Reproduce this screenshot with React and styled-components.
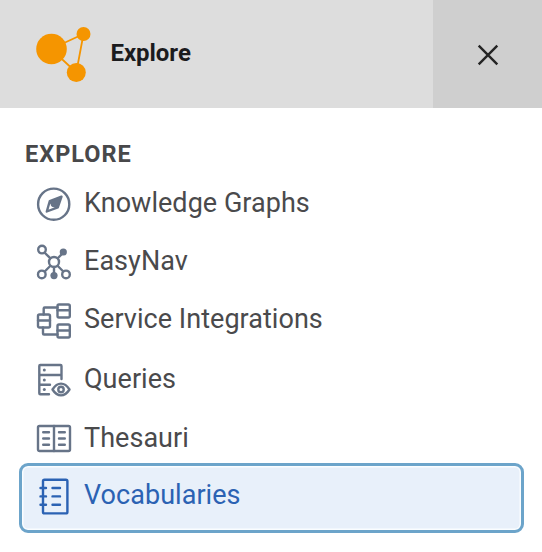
import React from "react";
import styled, { createGlobalStyle } from "styled-components";

const GlobalStyle = createGlobalStyle`
  * { box-sizing: border-box; }
  body { margin: 0; background: #fff; font-family: Roboto, "Liberation Sans", sans-serif; }
`;

const Panel = styled.div`
  width: 542px;
  height: 552px;
  overflow: hidden;
  background: #fff;
`;

const Header = styled.header`
  display: flex;
  height: 108px;
  background: #dddddd;
`;

const Brand = styled.div`
  flex: 1;
  display: flex;
  align-items: center;
  padding: 0 0 1px 34px;
  gap: 16.5px;
`;

const Title = styled.h1`
  margin: 0 0 2px;
  font-size: 24px;
  line-height: 32px;
  font-weight: 700;
  letter-spacing: -0.05px;
  color: #1b1b1d;
  white-space: nowrap;
`;

const CloseButton = styled.button`
  display: flex;
  align-items: center;
  justify-content: center;
  width: 109px;
  padding: 2px 0 0;
  border: 0;
  background: #cfcfcf;
  color: #242424;
`;

const Section = styled.nav`
  padding: 30px 18px 0 19px;
`;

const SectionTitle = styled.h2`
  margin: 0;
  padding-left: 6px;
  font-size: 23.5px;
  line-height: 32px;
  font-weight: 700;
  letter-spacing: 1px;
  color: #48484a;
`;

const List = styled.ul`
  list-style: none;
  margin: 4px 0 0;
  padding: 0;
`;

const Item = styled.li`
  display: flex;
  align-items: center;
  height: ${(p) => (p.$active ? 70 : p.$height)}px;
  gap: 12px;
  padding: ${(p) => (p.$active ? "0 0 5px 14px" : `${p.$inset || 0}px 0 0 17px`)};
  border: ${(p) => (p.$active ? "3px solid #6ca4ca" : "0")};
  border-radius: 9px;
  box-shadow: ${(p) => (p.$active ? "inset 0 0 0 1.5px #fafdff" : "none")};
  background: ${(p) => (p.$active ? "#e8f0fa" : "transparent")};
  color: ${(p) => (p.$active ? "#2b62b3" : "#4a4a4c")};
`;

const Label = styled.span`
  margin-bottom: ${(p) => (p.$active ? 2 : 0)}px;
  font-size: 27px;
  line-height: 34px;
  letter-spacing: 0.04px;
  white-space: nowrap;
`;

const Glyph = styled.svg`
  flex: none;
  width: 36px;
  height: 40px;
  fill: none;
  stroke: ${(p) => (p.$active ? "#2b62b3" : "#677488")};
  stroke-width: 2.4;
  stroke-linecap: round;
  stroke-linejoin: round;
`;

const Solid = styled.g`
  fill: #677488;
  stroke: none;
`;

const icons = {
  compass: (
    <>
      <circle cx="17.7" cy="21.2" r="15.6" />
      <path d="M25.5 13.6 13.8 18 10.8 28.5 21.8 24.3Z" />
      <path d="M25.5 13.6 13.8 18 12.5 22.5 17.5 18.5 18.6 25.5 21.8 24.3Z" fill="#677488" stroke="none" />
      <circle cx="18" cy="20.8" r="3.4" fill="#677488" stroke="none" />
    </>
  ),
  network: (
    <>
      <path d="m9 12 5.2 5.2M22 17l4-4M18 26v6M14.2 25l-5 5M21.8 25l5 5" />
      <circle cx="18" cy="21" r="5" />
      <circle cx="6" cy="8.6" r="3.8" />
      <circle cx="5.8" cy="33.4" r="3.8" />
      <circle cx="30" cy="33.4" r="3.8" />
      <Solid><circle cx="27.3" cy="11" r="3.6" /><circle cx="18" cy="34.6" r="3.6" /></Solid>
    </>
  ),
  integration: (
    <>
      <rect x="2" y="15.5" width="12" height="13" rx="1.5" />
      <rect x="21.5" y="5.5" width="12.3" height="13" rx="1.5" />
      <rect x="21.5" y="25.5" width="12.3" height="13" rx="1.5" />
      <path d="M2 21.5h12M21.5 11.2h12.3M21.5 31.5h12.3M7.7 15.5V9.5q0-1 1-1h12.8M7 28.5V34.5q0 1 1 1h13.5" />
    </>
  ),
  queries: (
    <>
      <path d="M13 35.3H4.3q-1 0-1-1V7q0-1 1-1h20.2q1 0 1 1v13M3.3 16h22.2M3.3 25.7H14" />
      <path d="M16.5 30.5C19.5 25.8 22.3 24.6 25 24.6S30.5 25.8 33.5 30.5C30.5 35.2 27.7 36.4 25 36.4S19.5 35.2 16.5 30.5Z" />
      <circle cx="25" cy="30.5" r="2.7" />
      <Solid><circle cx="8.3" cy="11" r="1.5" /><circle cx="8.3" cy="21" r="1.5" /><circle cx="8.3" cy="30.5" r="1.5" /></Solid>
    </>
  ),
  book: (
    <>
      <rect x="2" y="8" width="32" height="25" rx="1.5" />
      <path d="M18 8v25M7.2 14.3H13M7.2 20.5H13M7.2 26.7H13M23 14.3h5.8M23 20.5h5.8M23 26.7h5.8" />
    </>
  ),
  notebook: (
    <>
      <rect x="7" y="3.8" width="24.4" height="33.6" rx="1.5" />
      <path d="M4.5 12H10M4.5 20.4H10M4.5 28.8H10M16.5 12h7.5M16.5 20.4h7.5M16.5 28.8h7.5" />
    </>
  ),
};

const entries = [
  { icon: "compass", label: "Knowledge Graphs", height: 58 },
  { icon: "network", label: "EasyNav", height: 58 },
  { icon: "integration", label: "Service Integrations", height: 58 },
  { icon: "queries", label: "Queries", height: 61 },
  { icon: "book", label: "Thesauri", height: 54, inset: 4 },
  { icon: "notebook", label: "Vocabularies", active: true },
];

export default function App() {
  return (
    <Panel>
      <GlobalStyle />
      <Header>
        <Brand>
          <svg width="60" height="60" viewBox="34 24 60 60" fill="#f59500">
            <path d="M51 49 83.5 34 76.3 72.5Z" fill="none" stroke="#f59500" strokeWidth="1.8" />
            <circle cx="51.5" cy="49" r="15.3" />
            <circle cx="83.5" cy="34" r="7" />
            <circle cx="76.3" cy="72.5" r="9.5" />
          </svg>
          <Title>Explore</Title>
        </Brand>
        <CloseButton aria-label="Close">
          <svg width="22" height="22" viewBox="0 0 22 22" fill="none" stroke="currentColor" strokeWidth="2.4">
            <path d="M1.7 1.7 20.3 20.3M20.3 1.7 1.7 20.3" />
          </svg>
        </CloseButton>
      </Header>
      <Section>
        <SectionTitle>EXPLORE</SectionTitle>
        <List>
          {entries.map(({ icon, label, height, inset, active }) => (
            <Item key={label} $height={height} $inset={inset} $active={active}>
              <Glyph viewBox="0 0 36 40" $active={active}>{icons[icon]}</Glyph>
              <Label $active={active}>{label}</Label>
            </Item>
          ))}
        </List>
      </Section>
    </Panel>
  );
}
